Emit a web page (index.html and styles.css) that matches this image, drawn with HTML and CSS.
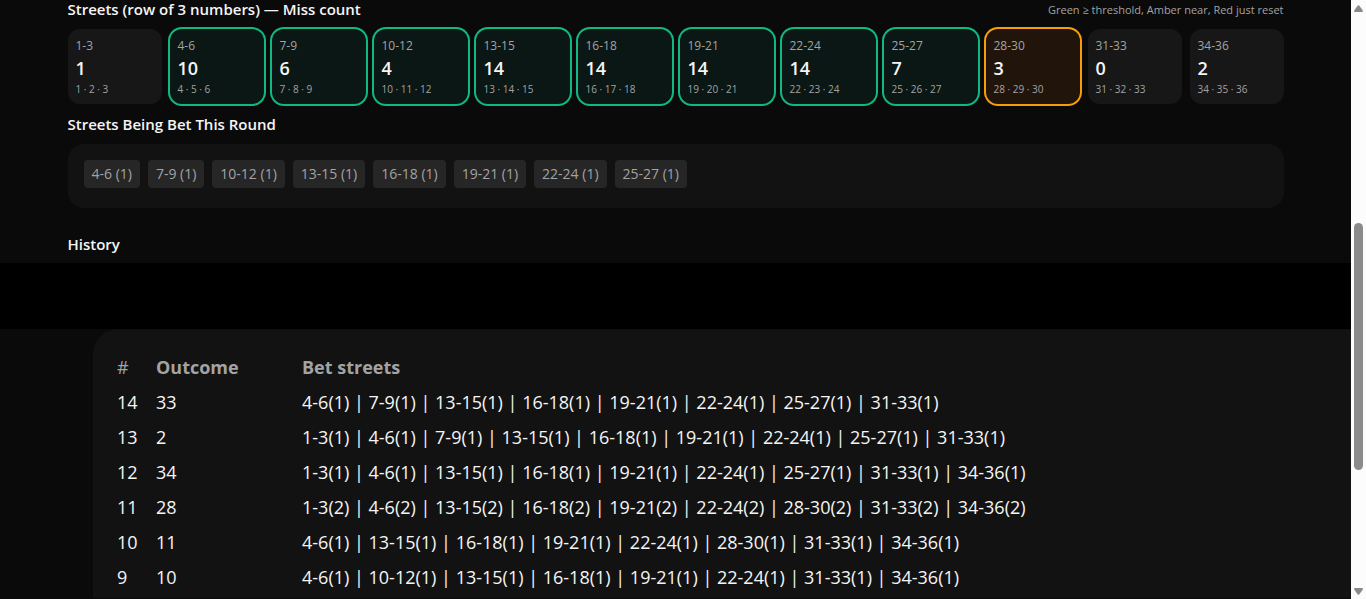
FILE: index.html
```html
<!DOCTYPE html>
<html lang="en">
<head>
	<meta charset="UTF-8">
	<title>Street tracker</title>
	<link rel="stylesheet" href="styles.css">
</head>
<body>
<div class="viewport">

	<main class="page">
		<div class="container">
			<div class="section-head">
				<h2>Streets (row of 3 numbers) — Miss count</h2>
				<span class="hint">Green ≥ threshold, Amber near, Red just reset</span>
			</div>

			<div class="streets">
				<div class="street"><div class="range">1-3</div><div class="count">1</div><div class="nums">1 · 2 · 3</div></div>
				<div class="street green"><div class="range">4-6</div><div class="count">10</div><div class="nums">4 · 5 · 6</div></div>
				<div class="street green"><div class="range">7-9</div><div class="count">6</div><div class="nums">7 · 8 · 9</div></div>
				<div class="street green"><div class="range">10-12</div><div class="count">4</div><div class="nums">10 · 11 · 12</div></div>
				<div class="street green"><div class="range">13-15</div><div class="count">14</div><div class="nums">13 · 14 · 15</div></div>
				<div class="street green"><div class="range">16-18</div><div class="count">14</div><div class="nums">16 · 17 · 18</div></div>
				<div class="street green"><div class="range">19-21</div><div class="count">14</div><div class="nums">19 · 20 · 21</div></div>
				<div class="street green"><div class="range">22-24</div><div class="count">14</div><div class="nums">22 · 23 · 24</div></div>
				<div class="street green"><div class="range">25-27</div><div class="count">7</div><div class="nums">25 · 26 · 27</div></div>
				<div class="street amber"><div class="range">28-30</div><div class="count">3</div><div class="nums">28 · 29 · 30</div></div>
				<div class="street"><div class="range">31-33</div><div class="count">0</div><div class="nums">31 · 32 · 33</div></div>
				<div class="street"><div class="range">34-36</div><div class="count">2</div><div class="nums">34 · 35 · 36</div></div>
			</div>

			<h2 class="bets-title">Streets Being Bet This Round</h2>
			<div class="bets">
				<span class="chip">4-6 (1)</span>
				<span class="chip">7-9 (1)</span>
				<span class="chip">10-12 (1)</span>
				<span class="chip">13-15 (1)</span>
				<span class="chip">16-18 (1)</span>
				<span class="chip">19-21 (1)</span>
				<span class="chip">22-24 (1)</span>
				<span class="chip">25-27 (1)</span>
			</div>

			<h2 class="history-title">History</h2>
		</div>

		<div class="band"></div>

		<div class="history">
			<table>
				<thead>
					<tr><th class="col-num">#</th><th class="col-outcome">Outcome</th><th>Bet streets</th></tr>
				</thead>
				<tbody>
					<tr><td>14</td><td>33</td><td>4-6(1) | 7-9(1) | 13-15(1) | 16-18(1) | 19-21(1) | 22-24(1) | 25-27(1) | 31-33(1)</td></tr>
					<tr><td>13</td><td>2</td><td>1-3(1) | 4-6(1) | 7-9(1) | 13-15(1) | 16-18(1) | 19-21(1) | 22-24(1) | 25-27(1) | 31-33(1)</td></tr>
					<tr><td>12</td><td>34</td><td>1-3(1) | 4-6(1) | 13-15(1) | 16-18(1) | 19-21(1) | 22-24(1) | 25-27(1) | 31-33(1) | 34-36(1)</td></tr>
					<tr><td>11</td><td>28</td><td>1-3(2) | 4-6(2) | 13-15(2) | 16-18(2) | 19-21(2) | 22-24(2) | 28-30(2) | 31-33(2) | 34-36(2)</td></tr>
					<tr><td>10</td><td>11</td><td>4-6(1) | 13-15(1) | 16-18(1) | 19-21(1) | 22-24(1) | 28-30(1) | 31-33(1) | 34-36(1)</td></tr>
					<tr><td>9</td><td>10</td><td>4-6(1) | 10-12(1) | 13-15(1) | 16-18(1) | 19-21(1) | 22-24(1) | 31-33(1) | 34-36(1)</td></tr>
				</tbody>
			</table>
		</div>
	</main>

	<div class="scrollbar" aria-hidden="true">
		<svg width="9" height="7" viewBox="0 0 9 7"><path d="M4.500.3C5 .3 5.300.5 5.600.9L8.700 5.300C9.200 6.100 8.900 7 8 7H1C.1 7-.2 6.100.3 5.300L3.400.9C3.700.5 4 .3 4.500.3Z" fill="#8b8b8b"/></svg>
		<div class="track"><div class="thumb"></div></div>
		<svg width="9" height="7" viewBox="0 0 9 7"><path d="M4.500 6.700C5 6.700 5.300 6.500 5.600 6.100L8.700 1.700C9.200.9 8.900 0 8 0H1C.1 0-.2.9.3 1.700L3.400 6.100C3.700 6.500 4 6.700 4.500 6.700Z" fill="#8b8b8b"/></svg>
	</div>

</div>
</body>
</html>
```
FILE: styles.css
```css
* {
	box-sizing: border-box;
}

body {
	margin: 0;
	background: #0a0a0a;
	color: #f5f5f5;
	font-family: "Segoe UI", "Open Sans", "Noto Sans", sans-serif;
}

h2 {
	margin: 0;
	font-size: 15px;
	line-height: 24px;
	font-weight: 600;
}

.viewport {
	display: flex;
	height: 100vh;
	overflow: hidden;
}

.page {
	flex: 1;
	min-width: 0;
}

.container {
	max-width: 1280px;
	margin: 0 auto;
	padding: 0 32px;
}

.section-head {
	display: flex;
	justify-content: space-between;
	height: 29px;
}

.section-head h2 {
	line-height: 18px;
}

.hint {
	color: #a3a3a3;
	font-size: 11px;
	line-height: 20px;
}

/* street cards */
.streets {
	display: grid;
	grid-template-columns: repeat(12, 1fr);
	gap: 8px;
}

.street {
	padding: 9px 8px 7px;
	border-radius: 12px;
	background: #171717;
}

.street.green {
	background: #0a1714;
	box-shadow: 0 0 0 2px #10b981;
}

.street.amber {
	background: #21140b;
	box-shadow: 0 0 0 2px #f59e0b;
}

.range {
	color: #a3a3a3;
	font-size: 12px;
	line-height: 16px;
}

.count {
	font-size: 18px;
	line-height: 28px;
	font-weight: 600;
}

.nums {
	color: #a3a3a3;
	font-size: 10px;
	line-height: 15px;
}

/* current bets */
.bets-title {
	margin: 8px 0;
}

.bets {
	display: flex;
	flex-wrap: wrap;
	gap: 8px;
	padding: 16px 16px 20px;
	border-radius: 16px;
	background: #121212;
}

.chip {
	padding: 4px 8px;
	border-radius: 4px;
	background: #262626;
	color: #a3a3a3;
	font-size: 14px;
	line-height: 20px;
}

.history-title {
	margin-top: 24px;
	padding-bottom: 7px;
}

.band {
	height: 66px;
	background: #000;
}

/* history table */
.history {
	margin-left: 93px;
	padding: 19px 24px 4px;
	border-top: 1px solid #0f0f0f;
	border-radius: 24px 0 0 0;
	background: #121212;
}

table {
	width: 100%;
	border-collapse: collapse;
	font-size: 18px;
}

th, td {
	height: 35px;
	padding: 0;
	line-height: 24px;
	text-align: left;
	white-space: nowrap;
}

th {
	color: #a3a3a3;
	font-weight: 700;
}

.col-num {
	width: 39px;
	font-weight: 400;
}

.col-outcome {
	width: 146px;
}

/* scrollbar */
.scrollbar {
	display: flex;
	flex-direction: column;
	align-items: center;
	width: 15px;
	padding: 5px 0 4px;
	background: #fcfcfc;
}

.track {
	flex: 1;
	width: 9px;
	padding-top: 211px;
}

.thumb {
	height: 247px;
	border-radius: 5px;
	background: #8b8b8b;
}
```
